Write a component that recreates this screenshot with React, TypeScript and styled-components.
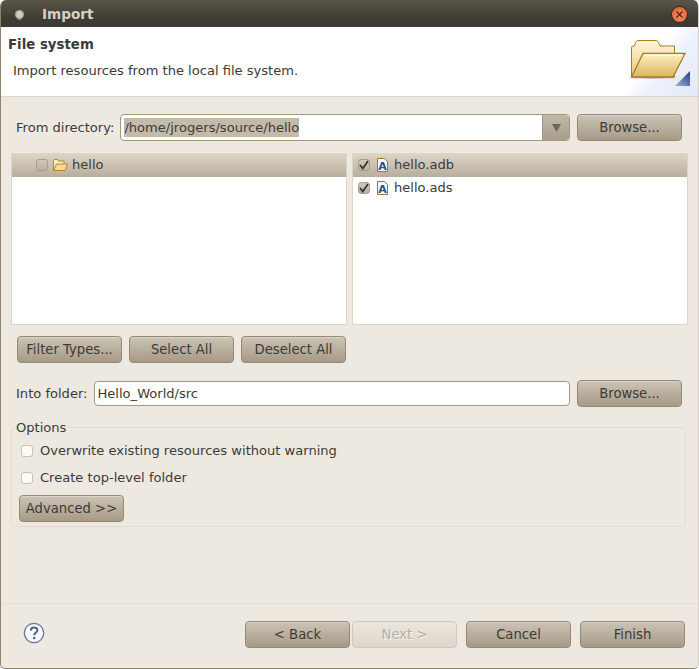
import React from "react";
import styled, { createGlobalStyle, css } from "styled-components";

const GlobalStyle = createGlobalStyle`
  html, body {
    margin: 0;
    padding: 0;
    background: #ffffff;
  }
  * {
    box-sizing: border-box;
  }
`;

const Window = styled.div`
  width: 699px;
  height: 669px;
  display: flex;
  flex-direction: column;
  overflow: hidden;
  background: #ede9e1;
  border-left: 1px solid #8f8370;
  border-bottom: 1px solid #8f8370;
  border-right: 1px solid #d8d2c6;
  border-radius: 6px 6px 5px 5px;
  font-family: "DejaVu Sans", sans-serif;
  font-size: 13.07px;
  color: #3c3b37;
`;

const TitleBar = styled.div`
  height: 27px;
  margin: 0 -1px;
  flex: none;
  display: flex;
  align-items: center;
  padding: 1px 13px 0;
  background: linear-gradient(#5a5649, #3e3b34 70%, #3c3b37);
  color: #d6d1c6;
  font-weight: bold;
  font-size: 13.6px;
`;

const TitleDot = styled.span`
  width: 9px;
  height: 9px;
  margin-left: 2px;
  margin-right: 18px;
  border-radius: 50%;
  background: radial-gradient(circle, #d0ccc2 40%, #77736a 100%);
  box-shadow: 0 3px 0 -2px #8d897d;
`;

const TitleText = styled.span`
  flex: 1;
`;

const CloseButton = styled.span`
  width: 15px;
  height: 15px;
  margin-right: -1px;
  display: flex;
  align-items: center;
  justify-content: center;
  border-radius: 50%;
  background: radial-gradient(circle at 50% 60%, #f58a5d, #e25b2b);
  box-shadow: 0 0 0 1px #2e2c28;
`;

const Header = styled.div`
  height: 70px;
  flex: none;
  display: flex;
  justify-content: space-between;
  background: #ffffff;
  border-bottom: 1px solid #dcd6c9;
`;

const HeaderText = styled.div`
  padding-top: 9px;
`;

const HeaderTitle = styled.div`
  margin-left: 7px;
  font-size: 13.33px;
  font-weight: bold;
  line-height: 17px;
`;

const HeaderDescription = styled.div`
  margin-left: 12px;
  margin-top: 9px;
  line-height: 17px;
`;

const HeaderImage = styled.div`
  width: 75px;
  height: 69px;
  display: flex;
  align-items: flex-start;
  background: linear-gradient(129deg, #ffffff 40%, #edf1fa 60%, #e3e9f6 100%);
`;

const Body = styled.div`
  flex: 1;
  display: flex;
  flex-direction: column;
`;

const Row = styled.div<{ $top: number }>`
  display: flex;
  align-items: center;
  margin-top: ${(p) => p.$top}px;
  padding: 0 16px 0 15px;
`;

const Label = styled.label`
  flex: none;
  margin-right: 6px;
`;

const Combo = styled.div`
  flex: 1;
  height: 27px;
  display: flex;
  margin-right: 7px;
  border: 1px solid #a39780;
  border-radius: 4px;
  background: #ffffff;
  overflow: hidden;
`;

const ComboValue = styled.div`
  flex: 1;
  display: flex;
  align-items: center;
  padding-left: 3px;
`;

const Selected = styled.span`
  background: #c4baab;
  line-height: 19px;
`;

const ComboArrow = styled.div`
  width: 27px;
  display: flex;
  align-items: center;
  justify-content: center;
  background: linear-gradient(#c2b9aa, #a99d8b);
  border-left: 1px solid #a39780;
`;

const buttonBase = css`
  width: 105px;
  height: 27px;
  flex: none;
  padding: 0;
  border: 1px solid #948974;
  border-radius: 4px;
  background: linear-gradient(#cbc3b6, #a79a87);
  box-shadow: inset 0 1px 0 #d9d3c8;
  color: #3c3b37;
  font-family: inherit;
  font-size: 13.2px;
  text-align: center;
`;

const Button = styled.button`
  ${buttonBase}
  &:disabled {
    background: linear-gradient(#ebe6dd, #ddd6ca);
    border-color: #cfc7b9;
    box-shadow: none;
    color: #b5afa4;
    text-shadow: 1px 1px 0 #f7f5f0;
  }
`;

const Panels = styled.div`
  margin-top: 12px;
  padding: 0 10px;
  display: grid;
  grid-template-columns: 336px 336px;
  gap: 5px;
`;

const Panel = styled.div`
  height: 172px;
  background: #ffffff;
  border: 1px solid #dcd6c9;
`;

const TreeRow = styled.div<{ $selected?: boolean; $indent: number }>`
  height: 23px;
  display: flex;
  align-items: center;
  padding-left: ${(p) => p.$indent}px;
  padding-bottom: 2px;
  ${(p) =>
    p.$selected &&
    css`
      background: linear-gradient(#dbd4c8, #b8ad9c);
    `}
`;

const Check = styled.span`
  width: 12px;
  height: 12px;
  flex: none;
  display: flex;
  align-items: center;
  justify-content: center;
  border: 1px solid #a89c8a;
  border-radius: 3px;
  background: linear-gradient(#cfc7b9, #bcb2a1);
`;

const RowIcon = styled.span<{ $before: number; $after: number }>`
  display: flex;
  margin-left: ${(p) => p.$before}px;
  margin-right: ${(p) => p.$after}px;
`;

const ButtonBar = styled.div`
  margin-top: 11px;
  padding-left: 16px;
  display: flex;
  gap: 7px;
`;

const TextInput = styled.div`
  flex: 1;
  height: 25px;
  margin-right: 7px;
  display: flex;
  align-items: center;
  padding-left: 3px;
  background: #ffffff;
  border: 1px solid #a39780;
  border-radius: 4px;
`;

const Options = styled.fieldset`
  margin: 12px 12px 0 10px;
  padding: 1px 0 5px 7px;
  height: 108px;
  border: 1px solid #e2ddd2;
  border-radius: 4px;
  display: flex;
  flex-direction: column;
  align-items: flex-start;
`;

const Legend = styled.legend`
  padding: 0;
  margin-left: -3px;
  line-height: 17px;
`;

const OptionRow = styled.label`
  display: flex;
  align-items: center;
  height: 27px;
  margin-left: 2px;
`;

const OptionBox = styled.span`
  width: 12px;
  height: 12px;
  flex: none;
  margin-right: 7px;
  background: #fbfaf8;
  border: 1px solid #c9c1b2;
  border-radius: 3px;
`;

const AdvancedButton = styled(Button)`
  margin-top: 4px;
`;

const Spacer = styled.div`
  flex: 1;
`;

const Separator = styled.div`
  height: 1px;
  background: #e3dfd5;
`;

const Footer = styled.div`
  height: 64px;
  display: flex;
  align-items: center;
  padding: 0 13px 3px 22px;
`;

const HelpLink = styled.span`
  display: flex;
  margin-bottom: 3px;
`;

const FooterButtons = styled.div`
  margin-left: auto;
  display: flex;
`;

const FooterButton = styled(Button)<{ $gap: number }>`
  margin-left: ${(p) => p.$gap}px;
`;

const FolderBanner = () => (
  <svg width="75" height="69" viewBox="0 0 75 69">
    <defs>
      <linearGradient id="back" x1="0" y1="0" x2="0" y2="1">
        <stop offset="0" stopColor="#fff6da" />
        <stop offset="1" stopColor="#e9c877" />
      </linearGradient>
      <linearGradient id="front" x1="0" y1="0" x2="0" y2="1">
        <stop offset="0" stopColor="#fdf0c2" />
        <stop offset="1" stopColor="#dcb55f" />
      </linearGradient>
      <linearGradient id="corner" x1="1" y1="0" x2="0" y2="1">
        <stop offset="0" stopColor="#1f3f80" />
        <stop offset="1" stopColor="#9db4de" />
      </linearGradient>
      <linearGradient id="shade" x1="0" y1="0" x2="1" y2="0">
        <stop offset="0" stopColor="#c9c3b4" stopOpacity="0" />
        <stop offset="0.5" stopColor="#c9c3b4" />
        <stop offset="1" stopColor="#c9c3b4" stopOpacity="0" />
      </linearGradient>
    </defs>
    <rect x="3" y="50" width="54" height="2" fill="url(#shade)" />
    <path
      d="M8.500 50V20.500a1.500 1.500 0 0 1 1.500-1.500h1.500l1-3.500 2-2h19l2 2 1.500 3.500H51.500V50Z"
      fill="url(#back)"
      stroke="#a67c1f"
    />
    <path d="M8.500 50 20 26.500h42L50 50Z" fill="url(#front)" stroke="#a67c1f" strokeWidth="1.300" />
    <path d="M21 28H59" stroke="#fffbe6" strokeWidth="1.300" />
    <path d="M52 59 67 44v15Z" fill="url(#corner)" />
  </svg>
);

const SmallFolder = () => (
  <svg width="15" height="12" viewBox="0 0 15 12">
    <path d="M.5 11V1.500l1-1h3l1 1.500h5.500v2" fill="#fbeec4" stroke="#b4842b" />
    <path d="M.5 11.500 3.500 5h11l-2.500 6.500Z" fill="#f9d98c" stroke="#b4842b" />
  </svg>
);

const FileIcon = () => (
  <svg width="11" height="14" viewBox="0 0 11 14">
    <path d="M.5.5H7.500L10.500 3.500v10H.5Z" fill="#f6f8fb" stroke="#9a7a35" />
    <text
      x="5.500"
      y="11.500"
      textAnchor="middle"
      fontSize="11"
      fontWeight="bold"
      fontFamily="DejaVu Sans"
      fill="#23528c"
    >
      A
    </text>
  </svg>
);

const CheckMark = () => (
  <svg width="10" height="10" viewBox="0 0 10 10">
    <path d="M1 5 3.800 8.500 9 1" fill="none" stroke="#33322e" strokeWidth="1.700" />
  </svg>
);

const HelpIcon = () => (
  <svg width="22" height="22" viewBox="0 0 22 22">
    <circle cx="11" cy="11" r="9.700" fill="#f7f8fb" stroke="#65799e" strokeWidth="1.300" />
    <path
      d="M7.800 8.600c0-4.200 6.600-4.200 6.600-.3 0 2.500-3.200 2.500-3.200 5"
      fill="none"
      stroke="#4f6288"
      strokeWidth="2"
    />
    <circle cx="11.200" cy="16" r="1.300" fill="#4f6288" />
  </svg>
);

export default function App() {
  return (
    <Window>
      <GlobalStyle />
      <TitleBar>
        <TitleDot />
        <TitleText>Import</TitleText>
        <CloseButton>
          <svg width="7" height="7" viewBox="0 0 7 7">
            <path d="M.5.500l6 6M6.500.5l-6 6" stroke="#4d2a1a" strokeWidth="1.300" />
          </svg>
        </CloseButton>
      </TitleBar>
      <Header>
        <HeaderText>
          <HeaderTitle>File system</HeaderTitle>
          <HeaderDescription>Import resources from the local file system.</HeaderDescription>
        </HeaderText>
        <HeaderImage>
          <FolderBanner />
        </HeaderImage>
      </Header>
      <Body>
        <Row $top={17}>
          <Label>From directory:</Label>
          <Combo>
            <ComboValue>
              <Selected>/home/jrogers/source/hello</Selected>
            </ComboValue>
            <ComboArrow>
              <svg width="9" height="8" viewBox="0 0 9 8">
                <path d="M0 0h9L4.500 8Z" fill="#6e675b" />
              </svg>
            </ComboArrow>
          </Combo>
          <Button>Browse...</Button>
        </Row>
        <Panels>
          <Panel>
            <TreeRow $selected $indent={24}>
              <Check />
              <RowIcon $before={5} $after={4}>
                <SmallFolder />
              </RowIcon>
              hello
            </TreeRow>
          </Panel>
          <Panel>
            <TreeRow $selected $indent={5}>
              <Check>
                <CheckMark />
              </Check>
              <RowIcon $before={7} $after={6}>
                <FileIcon />
              </RowIcon>
              hello.adb
            </TreeRow>
            <TreeRow $indent={5}>
              <Check>
                <CheckMark />
              </Check>
              <RowIcon $before={7} $after={6}>
                <FileIcon />
              </RowIcon>
              hello.ads
            </TreeRow>
          </Panel>
        </Panels>
        <ButtonBar>
          <Button>Filter Types...</Button>
          <Button>Select All</Button>
          <Button>Deselect All</Button>
        </ButtonBar>
        <Row $top={17}>
          <Label>Into folder:</Label>
          <TextInput>Hello_World/src</TextInput>
          <Button>Browse...</Button>
        </Row>
        <Options>
          <Legend>Options</Legend>
          <OptionRow>
            <OptionBox />
            Overwrite existing resources without warning
          </OptionRow>
          <OptionRow>
            <OptionBox />
            Create top-level folder
          </OptionRow>
          <AdvancedButton>Advanced &gt;&gt;</AdvancedButton>
        </Options>
        <Spacer />
        <Separator />
        <Footer>
          <HelpLink>
            <HelpIcon />
          </HelpLink>
          <FooterButtons>
            <FooterButton $gap={0}>&lt; Back</FooterButton>
            <FooterButton $gap={2} disabled>
              Next &gt;
            </FooterButton>
            <FooterButton $gap={9}>Cancel</FooterButton>
            <FooterButton $gap={9}>Finish</FooterButton>
          </FooterButtons>
        </Footer>
      </Body>
    </Window>
  );
}
